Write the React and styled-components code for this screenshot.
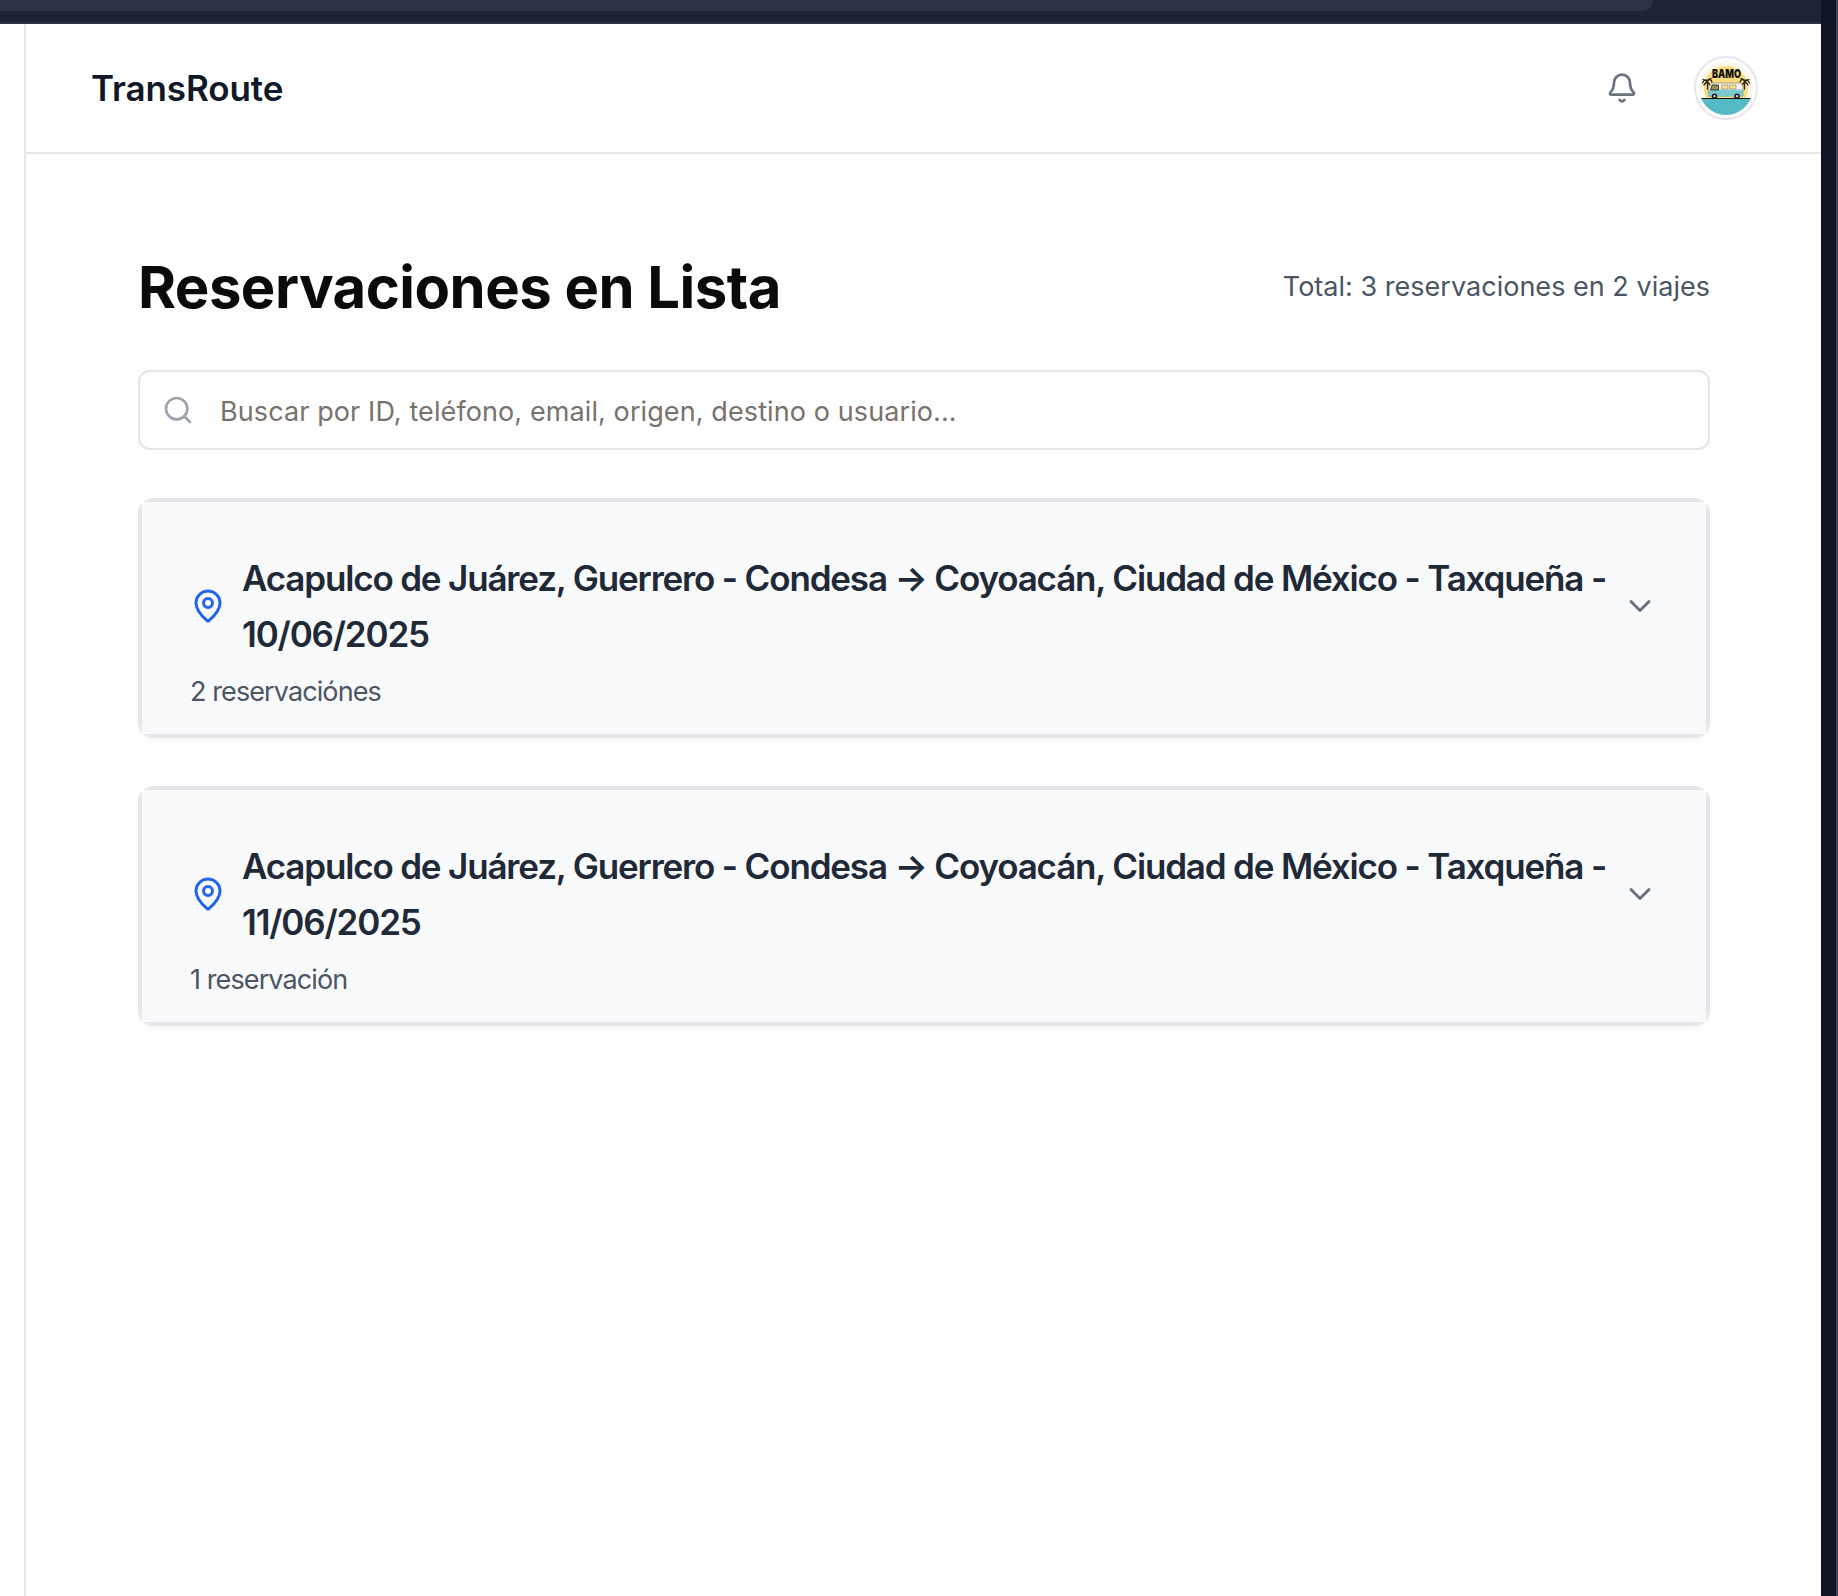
import React from "react";
import styled, { createGlobalStyle } from "styled-components";
import { Bell, Search, MapPin, ChevronDown } from "lucide-react";

const Global = createGlobalStyle`
  *, *::before, *::after { box-sizing: border-box; }
  body { margin: 0; background: #fff; font-family: Inter, "Liberation Sans", sans-serif; -webkit-font-smoothing: antialiased; }
  h1, h2, p { margin: 0; }
`;

const Screen = styled.div`
  display: flex;
  width: 100%;
  height: 1596px;
  overflow: hidden;
`;

const Window = styled.div`
  flex: 1;
  display: flex;
  flex-direction: column;
`;

const BrowserBar = styled.div`
  flex: none;
  height: 24px;
  background: #1e2433;
  border-bottom: 2px solid #2d3244;
`;

const AddressField = styled.div`
  width: 1653px;
  height: 11px;
  background: #2e3246;
  border-bottom-right-radius: 10px;
`;

const Body = styled.div`
  flex: 1;
  display: flex;
`;

const Sidebar = styled.aside`
  width: 26px;
  border-right: 2px solid #e5e7eb;
`;

const Main = styled.main`
  flex: 1;
  display: flex;
  flex-direction: column;
`;

const WindowEdge = styled.div`
  flex: none;
  width: 17px;
  background: #0f1524;
  border-right: 2px solid #41434f;
`;

const Header = styled.header`
  display: flex;
  align-items: center;
  justify-content: space-between;
  height: 130px;
  padding: 0 63px 0 65px;
  border-bottom: 2px solid #e5e7eb;
`;

const Brand = styled.span`
  font-size: 35px;
  line-height: 56px;
  font-weight: 600;
  letter-spacing: -0.1px;
  color: #111827;
`;

const HeaderActions = styled.div`
  display: flex;
  align-items: center;
  gap: 56px;
`;

const Avatar = styled.svg`
  display: block;
  width: 64px;
  height: 64px;
`;

const Content = styled.section`
  display: flex;
  flex-direction: column;
  padding: 96px 111px 0 112px;
`;

const TitleRow = styled.div`
  display: flex;
  align-items: center;
  justify-content: space-between;
  height: 72px;
  padding-top: 2px;
  margin-bottom: 48px;
`;

const Title = styled.h1`
  font-size: 58px;
  line-height: 72px;
  font-weight: 700;
  letter-spacing: -0.52px;
  color: #0a0a0a;
  white-space: nowrap;
`;

const Total = styled.p`
  font-size: 27px;
  line-height: 40px;
  letter-spacing: 0.02px;
  color: #4b5563;
  white-space: nowrap;
`;

const SearchBox = styled.label`
  display: flex;
  align-items: center;
  gap: 26px;
  height: 80px;
  padding: 0 22px;
  border: 2px solid #e5e5e5;
  border-radius: 12px;
  margin-bottom: 48px;
  color: #9ca3af;
`;

const SearchInput = styled.input`
  flex: 1;
  border: 0;
  outline: 0;
  padding: 3px 0 0;
  background: transparent;
  font: 400 27px/40px Inter, "Liberation Sans", sans-serif;
  letter-spacing: 0.1px;
  &::placeholder { color: #78716c; opacity: 1; }
`;

const TripList = styled.div`
  display: flex;
  flex-direction: column;
  gap: 48px;
`;

const Card = styled.article`
  height: 240px;
  border-radius: 16px;
  overflow: hidden;
  box-shadow: 0 2px 4px rgba(0, 0, 0, 0.05);
`;

const CardInner = styled.div`
  height: 100%;
  padding: 48px 48px 0;
  border: 4px solid #e5e7eb;
  background: #f9fafb;
`;

const TripRow = styled.div`
  display: flex;
  align-items: center;
  justify-content: space-between;
`;

const TripHeading = styled.div`
  display: flex;
  align-items: center;
  gap: 16px;
  color: #2563eb;
`;

const TripTitle = styled.h2`
  font-size: 35px;
  line-height: 56px;
  font-weight: 600;
  letter-spacing: -1.17px;
  color: #1f2937;
  white-space: nowrap;
`;

const Count = styled.p`
  font-size: 27px;
  line-height: 40px;
  letter-spacing: -0.9px;
  margin-top: 10px;
  color: #4b5563;
`;

const LogoText = styled.text`
  font: 900 12.4px Inter, sans-serif;
  fill: #111;
`;

function Logo() {
  return (
    <Avatar viewBox="0 0 64 64">
      <defs>
        <clipPath id="disc"><circle cx="32" cy="32" r="27" /></clipPath>
      </defs>
      <circle cx="32" cy="32" r="31" fill="#fff" stroke="#e5e7eb" strokeWidth="2" />
      <g clipPath="url(#disc)">
        <rect width="64" height="64" fill="#fdf8ec" />
        <circle cx="32" cy="32" r="22" fill="#fbdc7a" />
        <rect y="43" width="64" height="21" fill="#55b9c6" />
      </g>
      <g fill="none" stroke="#2a2118" strokeWidth="1.3" strokeLinecap="round">
        <path d="M13.5 33Q14 29 13 25M8.5 27Q11 22 13 25Q16 21 18 26M9 23.5L13 25L17 22.5M10 29L13 25L16 29" />
        <path d="M50.5 33Q50 29 51 25M55.5 27Q53 22 51 25Q48 21 46 26M55 23.5L51 25L47 22.5M54 29L51 25L48 29" />
      </g>
      <path d="M14.5 34Q15 28 18 27H45Q49 27 49 32V40H14.5Z" fill="#f6f3ea" stroke="#6b7578" strokeWidth=".6" />
      <path d="M14.5 34.5L26 33.5H49V40.5H14.5Z" fill="#7cc8d2" />
      <path d="M18 29H24.5V34H16.5Z" fill="#8d9450" stroke="#2f3330" strokeWidth=".9" />
      <path d="M27.5 29H34V33H27.5ZM35.5 29H42V33H35.5Z" fill="#f8df8c" stroke="#8d8468" strokeWidth=".6" />
      <circle cx="20.5" cy="40.2" r="2.8" fill="#222" />
      <circle cx="43" cy="40.2" r="2.8" fill="#222" />
      <circle cx="20.5" cy="40.2" r="1.1" fill="#ddd" />
      <circle cx="43" cy="40.2" r="1.1" fill="#ddd" />
      <path d="M7.5 42.5H56.5" stroke="#111" strokeWidth="1.1" />
      <LogoText x="32.5" y="21.6" textAnchor="middle" textLength="29" lengthAdjust="spacingAndGlyphs">BAMO</LogoText>
    </Avatar>
  );
}

const trips = [
  { date: "10/06/2025", count: "2 reservaciónes" },
  { date: "11/06/2025", count: "1 reservación" },
];

export default function App() {
  return (
    <Screen>
      <Global />
      <Window>
        <BrowserBar><AddressField /></BrowserBar>
        <Body>
          <Sidebar />
          <Main>
            <Header>
              <Brand>TransRoute</Brand>
              <HeaderActions>
                <Bell size={32} color="#6b7280" />
                <Logo />
              </HeaderActions>
            </Header>
            <Content>
              <TitleRow>
                <Title>Reservaciones en Lista</Title>
                <Total>Total: 3 reservaciones en 2 viajes</Total>
              </TitleRow>
              <SearchBox>
                <Search size={32} />
                <SearchInput placeholder="Buscar por ID, teléfono, email, origen, destino o usuario..." />
              </SearchBox>
              <TripList>
                {trips.map((trip) => (
                  <Card key={trip.date}>
                    <CardInner>
                      <TripRow>
                        <TripHeading>
                          <MapPin size={36} />
                          <TripTitle>
                            Acapulco de Juárez, Guerrero - Condesa → Coyoacán, Ciudad de México - Taxqueña -<br />
                            {trip.date}
                          </TripTitle>
                        </TripHeading>
                        <ChevronDown size={36} color="#6b7280" />
                      </TripRow>
                      <Count>{trip.count}</Count>
                    </CardInner>
                  </Card>
                ))}
              </TripList>
            </Content>
          </Main>
        </Body>
      </Window>
      <WindowEdge />
    </Screen>
  );
}
